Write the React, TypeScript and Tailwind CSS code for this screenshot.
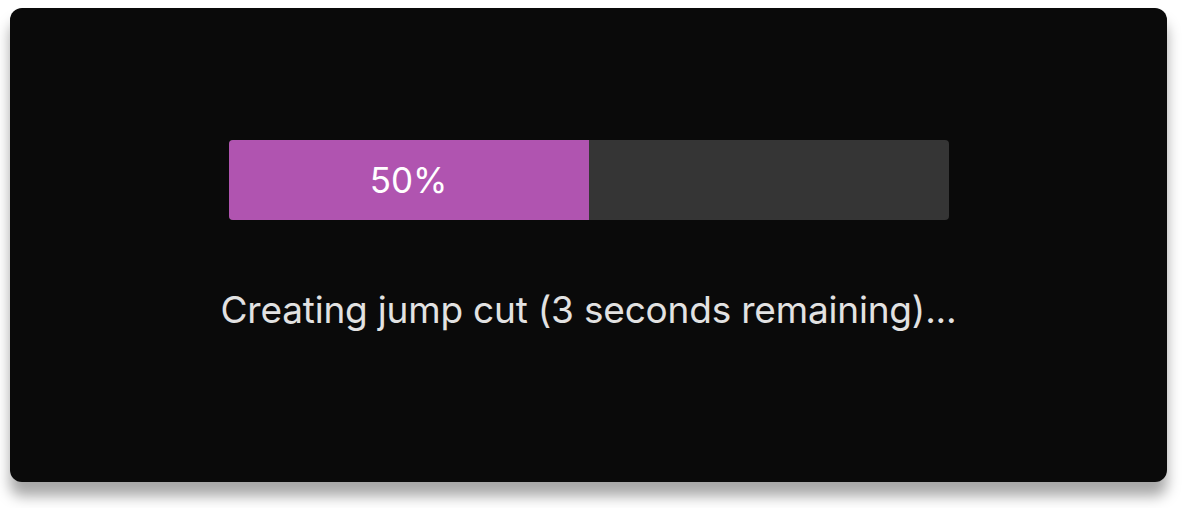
import React from 'react'

const progress = 50

const App: React.FC = () => {
  return (
    <div className="min-h-screen bg-white pt-2 pl-2.5 pr-6 pb-[26px]" style={{ fontFamily: 'Inter, "Noto Sans", sans-serif' }}>
      {/* Card */}
      <div className="w-[1157px] h-[474px] bg-[#0a0a0a] rounded-xl shadow-[0_14px_14px_rgba(0,0,0,0.35)] flex flex-col items-center">
        {/* Progress bar */}
        <div className="mt-[132px] w-[720px] h-20 rounded bg-[#353535] overflow-hidden flex">
          <div
            className="h-full bg-[#b054b0] flex items-center justify-center text-[35px] leading-none text-white"
            style={{ width: `${progress}%` }}
          >
            {progress}%
          </div>
        </div>

        {/* Status */}
        <p className="mt-[71px] text-[37px] leading-none tracking-[-0.2px] text-[#e2e2e2]">
          Creating jump cut (3 seconds remaining)...
        </p>
      </div>
    </div>
  )
}

export default App
